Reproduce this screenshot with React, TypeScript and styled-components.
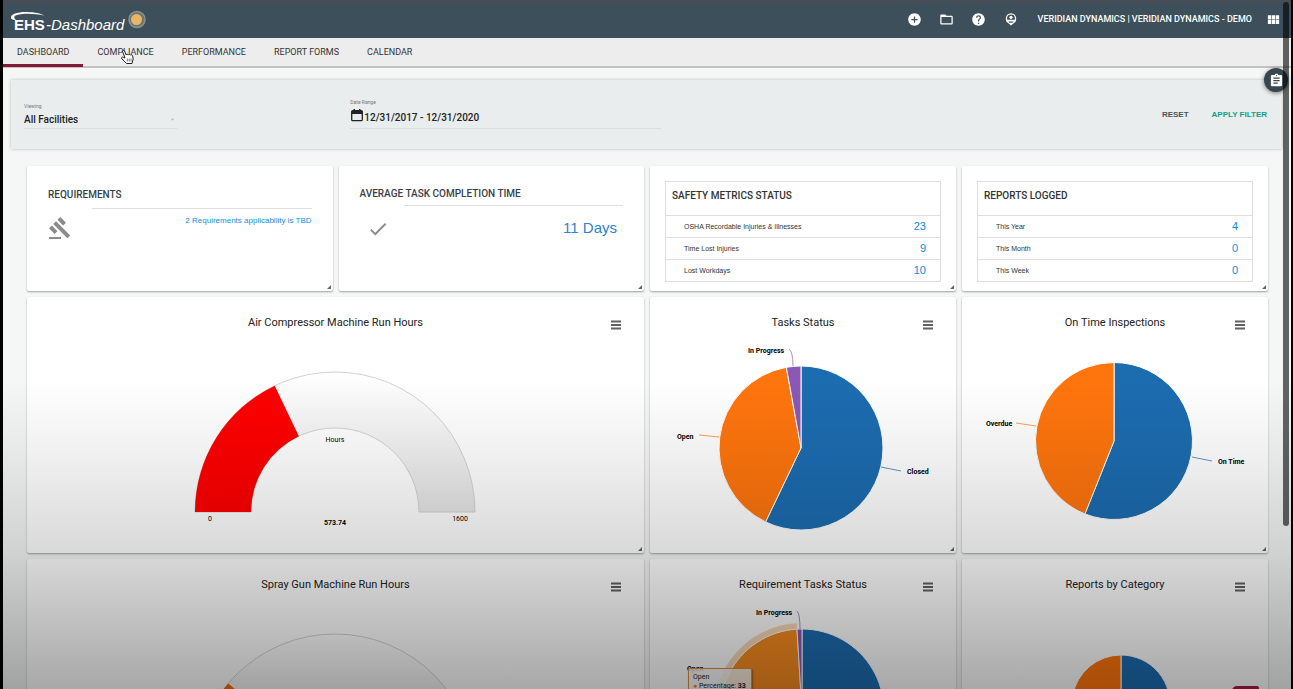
import React from 'react';
import styled, { createGlobalStyle } from 'styled-components';
import {
  MdAddCircle,
  MdFolderOpen,
  MdHelp,
  MdViewModule,
  MdAssignment,
  MdGavel,
  MdCheck,
  MdArrowDropDown,
} from 'react-icons/md';

const sans = '"Liberation Sans", Arial, sans-serif';
const roboto = 'Roboto, "Liberation Sans", sans-serif';

const GlobalStyle = createGlobalStyle`
  *, *::before, *::after { box-sizing: border-box; }
  html, body { margin: 0; height: 100%; background: #000; overflow: hidden; }
  button, select, input { font: inherit; color: inherit; margin: 0; padding: 0; border: 0; background: none; }
  button { cursor: pointer; }
  h1, h2 { margin: 0; font-weight: 400; }
  a { color: inherit; text-decoration: none; }
`;

const Page = styled.div`
  position: relative;
  height: 100vh;
  overflow: hidden;
  margin: 0 2px 0 3px;
  background: #f5f6f6;
  font-family: ${sans};
  color: #333;
`;

const Header = styled.header`
  display: flex;
  align-items: center;
  justify-content: space-between;
  height: 38px;
  padding: 0 10px 0 7px;
  background: linear-gradient(#4b4c50, #3d4f5a 4px, #3d4f5a);
  color: #fff;
`;

const Logo = styled.a`
  display: flex;
  align-items: center;
  height: 38px;
`;

const HeaderTools = styled.nav`
  display: flex;
  align-items: center;
  font-size: 9px;
  line-height: 14px;
`;

const ToolButton = styled.button`
  display: flex;
  align-items: center;
  justify-content: center;
  width: 32px;
  height: 24px;
`;

const AccountButton = styled.button`
  padding: 0 14px 0 11px;
  font-family: ${roboto};
  font-weight: 500;
`;

const AppsButton = styled.button`
  display: flex;
`;

const Tabs = styled.nav`
  display: flex;
  height: 30px;
  background: #ededed;
  border-bottom: 2px solid #c2c2c2;
`;

const Tab = styled.a<{ $active?: boolean }>`
  position: relative;
  height: 29px;
  padding: 0 14px;
  border-bottom: 3px solid ${(p) => (p.$active ? '#841a36' : 'transparent')};
  font-family: ${roboto};
  font-size: 9px;
  line-height: 28px;
  color: #333;
`;

const Pointer = styled.svg`
  position: absolute;
  left: 37px;
  top: 10px;
`;

const FilterBar = styled.form`
  display: grid;
  grid-template-columns: 21fr 20fr 39fr;
  height: 69px;
  margin: 12px 9px 0 8px;
  padding: 0 15px 0 13px;
  background: #e9edee;
  box-shadow: 0 0 3px rgba(0, 0, 0, 0.25);
`;

const Field = styled.div<{ $width: string; $top: number }>`
  width: ${(p) => p.$width};
  height: 49px;
  padding-top: ${(p) => p.$top}px;
  border-bottom: 1px solid #d9dddd;
  font-family: ${roboto};
  color: #222;
`;

const FieldLabel = styled.label`
  display: block;
  font-size: 5px;
  line-height: 8px;
  color: #777;
`;

const FieldRow = styled.div<{ $height: number }>`
  display: flex;
  align-items: center;
  height: ${(p) => p.$height}px;
  font-size: 10px;
  font-weight: 500;
`;

const FacilitySelect = styled.select`
  flex: 1;
  appearance: none;
  outline: 0;
`;

const DateInput = styled.input`
  flex: 1;
  padding-top: 5px;
  outline: 0;
`;

const FilterActions = styled.div`
  display: flex;
  align-items: center;
  justify-content: flex-end;
  gap: 23px;
  font-size: 8px;
  font-weight: 700;
`;

const FilterButton = styled.button<{ $primary?: boolean }>`
  color: ${(p) => (p.$primary ? '#12a184' : '#4b5458')};
`;

const Grid = styled.main`
  display: grid;
  grid-template-columns: repeat(4, 1fr);
  grid-template-rows: 125px 256px 256px;
  gap: 6px;
  padding: 17px 23px 0 24px;
`;

const Card = styled.section<{ $span?: number; $pad?: string }>`
  position: relative;
  grid-column: span ${(p) => p.$span ?? 1};
  padding: ${(p) => p.$pad ?? '0'};
  background: #fff;
  border-radius: 2px;
  box-shadow: 0 1px 2px rgba(0, 0, 0, 0.35);

  &::after {
    content: '';
    position: absolute;
    right: 2px;
    bottom: 2px;
    border: 2px solid transparent;
    border-right-color: #666;
    border-bottom-color: #666;
  }
`;

const StatTitle = styled.h2`
  font-family: ${roboto};
  font-size: 10px;
  font-weight: 500;
  line-height: 16px;
  color: #3a4148;
`;

const StatRule = styled.div<{ $top: number }>`
  height: 1px;
  margin: ${(p) => p.$top}px 0 0 44px;
  background: #dedede;
`;

const StatBody = styled.div<{ $pad: string }>`
  display: flex;
  justify-content: space-between;
  align-items: flex-start;
  padding: ${(p) => p.$pad};
  color: #8b8b8b;
`;

const StatLink = styled.a<{ $large?: boolean }>`
  font-size: ${(p) => (p.$large ? 15 : 8)}px;
  line-height: ${(p) => (p.$large ? 20 : 10)}px;
  color: ${(p) => (p.$large ? '#2f80cf' : '#0f8fe4')};
`;

const MetricTable = styled.table`
  width: 100%;
  border-collapse: collapse;
  border: 1px solid #dedede;
  color: #333;

  th, td {
    height: 22px;
    padding: 0 14px 1px 18px;
    border-top: 1px solid #dedede;
    font-size: 7px;
    font-weight: 400;
    text-align: left;
  }
  thead th {
    height: 34px;
    padding: 0 6px 7px;
    font-family: ${roboto};
    font-size: 10px;
    font-weight: 500;
  }
  td {
    font-size: 11px;
    color: #0c8cd8;
    text-align: right;
  }
`;

const ChartHeader = styled.header`
  position: relative;
  height: 44px;
  padding-top: 18px;
  text-align: center;
`;

const ChartTitle = styled.h2`
  font-family: ${roboto};
  font-size: 11px;
  line-height: 16px;
  color: #222;
`;

const MenuButton = styled.button`
  position: absolute;
  right: 22px;
  top: 22px;
  display: flex;
  padding: 1px;
`;

const ChartBody = styled.div`
  display: flex;
  justify-content: center;
  height: 212px;

  text {
    font-family: ${roboto};
    font-size: 7px;
    fill: #000;
  }
`;

const Tooltip = styled.div`
  position: absolute;
  left: 38px;
  top: 109px;
  width: 64px;
  height: 30px;
  padding: 4px;
  border: 1px solid #e08a3c;
  border-radius: 2px;
  background: rgba(247, 247, 247, 0.85);
  box-shadow: 1px 1px 2px rgba(0, 0, 0, 0.35);
  font-family: ${roboto};
  font-size: 7px;
  line-height: 9px;
  color: #222;
`;

const Dot = styled.span`
  color: #f5811f;
`;

const Shade = styled.div`
  position: absolute;
  inset: 0;
  pointer-events: none;
  background: linear-gradient(
    transparent 55%,
    rgba(0, 0, 0, 0.06) 66%,
    rgba(0, 0, 0, 0.15) 80%,
    rgba(0, 0, 0, 0.34) 100%
  );
`;

const ScrollThumb = styled.div`
  position: absolute;
  top: 2px;
  right: 2px;
  width: 6px;
  height: 76%;
  border-radius: 3px;
  background: rgba(0, 0, 0, 0.6);
`;

const NotesButton = styled.button`
  position: absolute;
  top: 68px;
  right: 3px;
  display: flex;
  align-items: center;
  justify-content: center;
  width: 24px;
  height: 24px;
  border-radius: 50%;
  background: #37464f;
  color: #fff;
  box-shadow: 0 1px 4px rgba(0, 0, 0, 0.5);
`;

const HelpTab = styled.button`
  position: absolute;
  right: 32px;
  bottom: -21px;
  width: 27px;
  height: 24px;
  border-radius: 5px 2px 0 0;
  background: #6f1230;
`;

const BLUE = '#1c6cb0';
const ORANGE = '#ff750d';
const PURPLE = '#8b58b5';

type Slice = { to: number; color: string };

const point = (cx: number, cy: number, r: number, deg: number) => {
  const a = (deg * Math.PI) / 180;
  return `${(cx + r * Math.sin(a)).toFixed(2)} ${(cy - r * Math.cos(a)).toFixed(2)}`;
};

const Pie = ({ cx, cy, r, slices }: { cx: number; cy: number; r: number; slices: Slice[] }) => (
  <g stroke="#fff" strokeWidth="1">
    {slices.map((s, i) => {
      const from = i ? slices[i - 1].to : 0;
      const large = s.to - from > 180 ? 1 : 0;
      return (
        <path
          key={s.color}
          fill={s.color}
          d={`M${cx} ${cy}L${point(cx, cy, r, from)}A${r} ${r} 0 ${large} 1 ${point(cx, cy, r, s.to)}Z`}
        />
      );
    })}
  </g>
);

const band = (from: number, to: number) =>
  `M${point(153, 171, 140, from)}A140 140 0 0 1 ${point(153, 171, 140, to)}` +
  `L${point(153, 171, 84, to)}A84 84 0 0 0 ${point(153, 171, 84, from)}Z`;

const Gauge = ({ id, angle, color, value }: { id: string; angle: number; color: string; value?: string }) => (
  <svg width="308" height="212" viewBox="0 0 308 212" role="img" aria-label="Run hours gauge">
    <defs>
      <linearGradient id={id} x1="0" y1="0" x2="0" y2="1">
        <stop offset="0" stopColor="#fff" />
        <stop offset="1" stopColor="#e6e6e6" />
      </linearGradient>
    </defs>
    <path d={band(-90, 90)} fill={`url(#${id})`} stroke="#d2d2d2" />
    <path d={band(-90, angle - 90)} fill={color} />
    {value && (
      <>
        <text x="153" y="101" textAnchor="middle">Hours</text>
        <text x="28" y="180" textAnchor="middle">0</text>
        <text x="278" y="180" textAnchor="middle">1600</text>
        <text x="153" y="184" textAnchor="middle" fontWeight="700">{value}</text>
      </>
    )}
  </svg>
);

const ChartCard = ({ title, span, children }: { title: string; span?: number; children: React.ReactNode }) => (
  <Card $span={span}>
    <ChartHeader>
      <ChartTitle>{title}</ChartTitle>
      <MenuButton aria-label={`${title} menu`}>
        <svg width="10" height="10" viewBox="0 0 10 10" stroke="#606060" strokeWidth="2">
          <path d="M0 1.5h10M0 5h10M0 8.5h10" />
        </svg>
      </MenuButton>
    </ChartHeader>
    <ChartBody>{children}</ChartBody>
  </Card>
);

const Metrics = ({ title, rows }: { title: string; rows: [string, number][] }) => (
  <Card $pad="15px">
    <MetricTable>
      <thead>
        <tr><th colSpan={2}>{title}</th></tr>
      </thead>
      <tbody>
        {rows.map(([label, n]) => (
          <tr key={label}>
            <th scope="row">{label}</th>
            <td>{n}</td>
          </tr>
        ))}
      </tbody>
    </MetricTable>
  </Card>
);

export default function App() {
  return (
    <>
      <GlobalStyle />
      <Page>
        <Header>
          <Logo href="#" aria-label="EHS-Dashboard">
            <svg width="140" height="38" viewBox="0 0 140 38">
              <path d="M1 18C0 14 8 11.800 17 12C25 12.200 31 13.500 34 15.500C26 13.600 12 12.600 5.500 15.500C3.500 16.500 4 18.500 6 20C3 20 1.500 19.500 1 18Z" fill="#fff" />
              <g fill="#fff" fontFamily={sans}>
                <text x="4" y="30" fontSize="15" fontWeight="700">EHS</text>
                <text x="36" y="30" fontSize="15" fontStyle="italic">-Dashboard</text>
              </g>
              <circle cx="127" cy="19.500" r="8" fill="#6d7472" stroke="#8a9292" strokeWidth="1.500" />
              <circle cx="126.500" cy="19.500" r="5.500" fill="#eab566" />
            </svg>
          </Logo>
          <HeaderTools>
            <ToolButton aria-label="Add"><MdAddCircle size={15} /></ToolButton>
            <ToolButton aria-label="Folders"><MdFolderOpen size={15} /></ToolButton>
            <ToolButton aria-label="Help"><MdHelp size={15} /></ToolButton>
            <ToolButton aria-label="Account">
              <svg width="12" height="13" viewBox="0 0 12 13">
                <circle cx="6" cy="5.500" r="4.600" fill="none" stroke="#fff" strokeWidth="1.300" />
                <circle cx="6" cy="4.300" r="1.600" fill="#fff" />
                <path d="M.8 6.800h10.400c-.2 1.300-.9 2.200-1.800 2.800L6 12.500 2.600 9.600C1.700 9 1 8.100.8 6.800Z" fill="#fff" />
                <path d="M3.300 8.600h5.400L7.600 9.800H4.400Z" fill="#3d4f5a" />
              </svg>
            </ToolButton>
            <AccountButton>VERIDIAN DYNAMICS | VERIDIAN DYNAMICS - DEMO</AccountButton>
            <AppsButton aria-label="Apps"><MdViewModule size={15} /></AppsButton>
          </HeaderTools>
        </Header>

        <Tabs>
          <Tab href="#" $active>DASHBOARD</Tab>
          <Tab href="#">
            COMPLIANCE
            <Pointer width="15" height="17" viewBox="0 0 15 17">
              <path
                d="M5 10 2.600 3.600C2.200 2.300 4 1.700 4.500 2.900L6.200 7C6.600 6 8 6 8.400 6.900 9 6.100 10.200 6.200 10.600 7.100 11.400 6.500 12.400 6.900 12.600 7.800L13.200 11 12 15.500H6.600L1.800 10.800C1 9.700 2.300 8.500 3.400 9.300Z"
                fill="#fff"
                stroke="#222"
                strokeWidth="1"
              />
              <path d="M7.300 10.500v3M9.200 10.500v3M11 10.500v3" stroke="#555" strokeWidth=".8" />
            </Pointer>
          </Tab>
          <Tab href="#">PERFORMANCE</Tab>
          <Tab href="#">REPORT FORMS</Tab>
          <Tab href="#">CALENDAR</Tab>
        </Tabs>

        <FilterBar onSubmit={(e) => e.preventDefault()}>
          <Field $width="47%" $top={22}>
            <FieldLabel htmlFor="facility">Viewing</FieldLabel>
            <FieldRow $height={18}>
              <FacilitySelect id="facility"><option>All Facilities</option></FacilitySelect>
              <MdArrowDropDown size={9} color="#bbb" />
            </FieldRow>
          </Field>
          <Field $width="100%" $top={18}>
            <FieldLabel htmlFor="range">Date Range</FieldLabel>
            <FieldRow $height={18}>
              <svg width="14" height="14" viewBox="0 0 14 14">
                <rect x="1.700" y="2.700" width="10.600" height="10" rx="1" fill="none" stroke="#222" strokeWidth="1.300" />
                <path d="M1.500 3h11v3h-11ZM3.500 1h1.500v2H3.500ZM9 1h1.500v2H9Z" fill="#222" />
              </svg>
              <DateInput id="range" defaultValue="12/31/2017 - 12/31/2020" />
            </FieldRow>
          </Field>
          <FilterActions>
            <FilterButton type="reset">RESET</FilterButton>
            <FilterButton type="submit" $primary>APPLY FILTER</FilterButton>
          </FilterActions>
        </FilterBar>

        <Grid>
          <Card $pad="21px 21px 0">
            <StatTitle>REQUIREMENTS</StatTitle>
            <StatRule $top={5} />
            <StatBody $pad="7px 0 0">
              <MdGavel size={24} />
              <StatLink href="#">2 Requirements applicability is TBD</StatLink>
            </StatBody>
          </Card>
          <Card $pad="20px 21px 0">
            <StatTitle>AVERAGE TASK COMPLETION TIME</StatTitle>
            <StatRule $top={3} />
            <StatBody $pad="12px 6px 0 7px">
              <MdCheck size={22} />
              <StatLink href="#" $large>11 Days</StatLink>
            </StatBody>
          </Card>
          <Metrics
            title="SAFETY METRICS STATUS"
            rows={[['OSHA Recordable Injuries & Illnesses', 23], ['Time Lost Injuries', 9], ['Lost Workdays', 10]]}
          />
          <Metrics title="REPORTS LOGGED" rows={[['This Year', 4], ['This Month', 0], ['This Week', 0]]} />

          <ChartCard title="Air Compressor Machine Run Hours" span={2}>
            <Gauge id="air" angle={64.5} color="#ff0000" value="573.74" />
          </ChartCard>
          <ChartCard title="Tasks Status">
            <svg width="306" height="212" viewBox="0 0 306 212" role="img" aria-label="Tasks status pie chart">
              <Pie cx={151} cy={107} r={82} slices={[{ to: 205.6, color: BLUE }, { to: 349.7, color: ORANGE }, { to: 360, color: PURPLE }]} />
              <path d="M139 8q4 3 4 17" fill="none" stroke={PURPLE} opacity=".7" />
              <path d="M49 94l20 2" stroke={ORANGE} opacity=".7" />
              <path d="M231 126l20 4" stroke={BLUE} opacity=".7" />
              <g fontWeight="700">
                <text x="98" y="12">In Progress</text>
                <text x="27" y="98">Open</text>
                <text x="257" y="133">Closed</text>
              </g>
            </svg>
          </ChartCard>
          <ChartCard title="On Time Inspections">
            <svg width="306" height="212" viewBox="0 0 306 212" role="img" aria-label="On time inspections pie chart">
              <Pie cx={152} cy={100} r={78.5} slices={[{ to: 201.7, color: BLUE }, { to: 360, color: ORANGE }]} />
              <path d="M54 82l20 3" stroke={ORANGE} opacity=".7" />
              <path d="M230 116l20 4" stroke={BLUE} opacity=".7" />
              <g fontWeight="700">
                <text x="24" y="85">Overdue</text>
                <text x="256" y="123">On Time</text>
              </g>
            </svg>
          </ChartCard>

          <ChartCard title="Spray Gun Machine Run Hours" span={2}>
            <Gauge id="spray" angle={40.3} color="#ff6600" />
          </ChartCard>
          <ChartCard title="Requirement Tasks Status">
            <svg width="306" height="212" viewBox="0 0 306 212" role="img" aria-label="Requirement tasks status pie chart">
              <path d={`M152 108L${point(152, 108, 88, 237.7)}A88 88 0 0 1 ${point(152, 108, 88, 356.5)}Z`} fill="#f0a04b" opacity=".4" />
              <Pie cx={152} cy={108} r={82} slices={[{ to: 237.7, color: BLUE }, { to: 356.5, color: '#f58a1f' }, { to: 360, color: PURPLE }]} />
              <path d="M147 8q3 3 3 18" fill="none" stroke={PURPLE} opacity=".7" />
              <g fontWeight="700">
                <text x="106" y="12">In Progress</text>
                <text x="37" y="68">Open</text>
              </g>
            </svg>
            <Tooltip>
              Open<br />
              <Dot>●</Dot> Percentage: <b>33</b>
            </Tooltip>
          </ChartCard>
          <ChartCard title="Reports by Category">
            <svg width="306" height="212" viewBox="0 0 306 212" role="img" aria-label="Reports by category pie chart">
              <Pie cx={159} cy={101} r={49} slices={[{ to: 200, color: BLUE }, { to: 360, color: ORANGE }]} />
            </svg>
          </ChartCard>
        </Grid>

        <Shade />
        <HelpTab aria-label="Support" />
        <NotesButton aria-label="Notes"><MdAssignment size={15} /></NotesButton>
        <ScrollThumb />
      </Page>
    </>
  );
}
